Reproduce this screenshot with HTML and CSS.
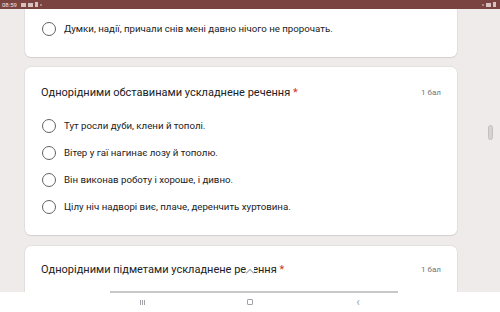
FILE: index.html
```html
<!DOCTYPE html>
<html lang="uk">
<head>
<meta charset="utf-8">
<link rel="stylesheet" href="styles.css">
</head>
<body>
<div class="screen">
  <div class="status">
    <div class="status-left">
      <span class="time">08:59</span>
      <span class="sicon sq"></span>
      <span class="sicon sq"></span>
      <span class="sicon tall"></span>
      <span class="sicon dot"></span>
    </div>
    <div class="status-right">
      <span class="sicon dot"></span>
      <span class="sicon sq"></span>
      <span class="sicon tall"></span>
    </div>
  </div>
  <div class="content">
    <div class="column">
      <div class="card card-top">
        <div class="option"><span class="radio"></span><span>Думки, надії, причали снів мені давно нічого не пророчать.</span></div>
      </div>
      <div class="card">
        <div class="qhead"><span class="qtitle">Однорідними обставинами ускладнене речення <span class="req">*</span></span><span class="pts">1 бал</span></div>
        <div class="options">
          <div class="option"><span class="radio"></span><span>Тут росли дуби, клени й тополі.</span></div>
          <div class="option"><span class="radio"></span><span>Вітер у гаї нагинає лозу й тополю.</span></div>
          <div class="option"><span class="radio"></span><span>Він виконав роботу і хороше, і дивно.</span></div>
          <div class="option"><span class="radio"></span><span>Цілу ніч надворі виє, плаче, деренчить хуртовина.</span></div>
        </div>
      </div>
      <div class="card card-last">
        <div class="qhead"><span class="qtitle">Однорідними підметами ускладнене речення <span class="req">*</span></span><span class="pts">1 бал</span></div>
        <span class="caret"></span>
      </div>
    </div>
    <div class="rail"><span class="thumb"></span></div>
  </div>
  <div class="navbar">
    <span class="navline"></span>
    <span class="nav-recent"><i></i><i></i><i></i></span>
    <span class="nav-home"></span>
    <span class="nav-ic back">&lsaquo;</span>
  </div>
</div>
</body>
</html>
```

FILE: styles.css
```css
* { box-sizing: border-box; }
html, body { margin: 0; padding: 0; }
body {
  width: 500px;
  height: 312px;
  overflow: hidden;
  font-family: Roboto, "Noto Sans", Arial, sans-serif;
  color: #202124;
  background: #efebea;
}
.screen { width: 500px; height: 312px; display: flex; flex-direction: column; }
.status {
  height: 9px;
  background: #7b4340;
  display: flex;
  justify-content: space-between;
  align-items: center;
  padding: 0 4px 0 2px;
  flex: none;
}
.status-left, .status-right { display: flex; align-items: center; gap: 2px; }
.time { color: #f1e6e5; font-size: 6px; line-height: 6px; margin-right: 2px; }
.sicon { display: inline-block; background: #e8d8d6; opacity: .85; }
.sicon.sq { width: 5px; height: 4px; }
.sicon.tall { width: 3px; height: 5px; }
.sicon.dot { width: 2px; height: 2px; border-radius: 50%; opacity: .6; }
.content { flex: 1; display: flex; overflow: hidden; position: relative; }
.column {
  width: 432px;
  margin-left: 25px;
  display: flex;
  flex-direction: column;
  gap: 10px;
}
.card {
  background: #fff;
  border-radius: 6px;
  box-shadow: 0 1px 1px rgba(0,0,0,.08), 0 0 0 1px rgba(0,0,0,.04);
  padding: 16px 16px 15px 16px;
  flex: none;
  position: relative;
}
.card-top {
  border-radius: 0 0 6px 6px;
  height: 48px;
  padding: 11px 16px 0 16px;
}
.card-last { height: 60px; padding-top: 14px; margin-top: 1px; }
.qhead { display: flex; justify-content: space-between; align-items: center; height: 18px; }
.qtitle { font-size: 11px; }
.req { color: #d93025; }
.pts { font-size: 8px; color: #70757a; }
.options { margin-top: 11px; display: flex; flex-direction: column; }
.option {
  display: flex;
  align-items: center;
  height: 27px;
  font-size: 9.7px;
  gap: 8px;
  padding-left: 1px;
}
.card-top .option { height: 17px; }
.radio {
  width: 14px;
  height: 14px;
  border: 1.6px solid #5f6368;
  border-radius: 50%;
  flex: none;
}
.caret {
  position: absolute;
  left: 221px;
  top: 18px;
  width: 8px;
  height: 12px;
  background: #fff;
}
.caret::after {
  content: "";
  position: absolute;
  left: 1px;
  top: 6px;
  width: 5px;
  height: 5px;
  border-left: 1px solid #9aa0a6;
  border-top: 1px solid #9aa0a6;
  transform: rotate(45deg);
}
.rail { flex: 1; position: relative; }
.thumb {
  position: absolute;
  left: 31px;
  top: 116px;
  width: 5px;
  height: 15px;
  border-radius: 3px;
  background: #d6d2d1;
  border: 1px solid #c4c0bf;
}
.navbar {
  height: 20px;
  background: #fff;
  flex: none;
  position: relative;
  display: flex;
  justify-content: center;
  align-items: center;
  gap: 100px;
  color: #a0a4a8;
  font-size: 8px;
}
.navline {
  position: absolute;
  left: 110px;
  top: -1px;
  width: 288px;
  height: 1.5px;
  background: #c8c8c8;
}
.nav-recent { width: 10px; display: flex; justify-content: center; gap: 1px; }
.nav-recent i { display: block; width: 1px; height: 5px; background: #a0a4a8; }
.nav-ic { width: 10px; text-align: center; }
.nav-ic.back { font-size: 12px; line-height: 12px; }
.nav-home { width: 6px; height: 6px; border: 1px solid #a0a4a8; border-radius: 1px; }
```
